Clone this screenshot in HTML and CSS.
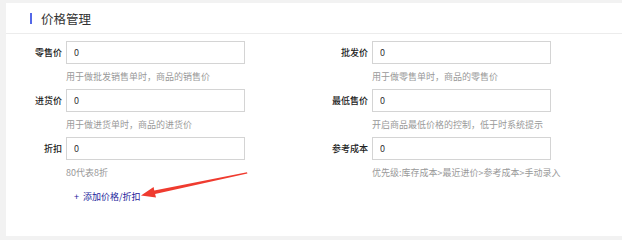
FILE: index.html
```html
<!DOCTYPE html>
<html lang="zh-CN">
<head>
    <meta charset="UTF-8">
    <title>价格管理</title>
    <link rel="stylesheet" href="styles.css">
</head>
<body>

    <div class="panel">
        <!-- Heading -->
        <div class="panel-title">
            <span class="title-bar"></span>
            <span>价格管理</span>
        </div>

        <!-- Price fields -->
        <div class="price-form">
            <div class="field">
                <div class="field-row">
                    <label>零售价</label>
                    <input type="text" value="0">
                </div>
                <p class="hint">用于做批发销售单时，商品的销售价</p>
            </div>
            <div class="field">
                <div class="field-row">
                    <label>批发价</label>
                    <input type="text" value="0">
                </div>
                <p class="hint">用于做零售单时，商品的零售价</p>
            </div>
            <div class="field">
                <div class="field-row">
                    <label>进货价</label>
                    <input type="text" value="0">
                </div>
                <p class="hint">用于做进货单时，商品的进货价</p>
            </div>
            <div class="field">
                <div class="field-row">
                    <label>最低售价</label>
                    <input type="text" value="0">
                </div>
                <p class="hint">开启商品最低价格的控制，低于时系统提示</p>
            </div>
            <div class="field">
                <div class="field-row">
                    <label>折扣</label>
                    <input type="text" value="0">
                </div>
                <p class="hint">80代表8折</p>
            </div>
            <div class="field">
                <div class="field-row">
                    <label>参考成本</label>
                    <input type="text" value="0">
                </div>
                <p class="hint">优先级:库存成本&gt;最近进价&gt;参考成本&gt;手动录入</p>
            </div>
        </div>

        <a class="add-link" href="#">+&nbsp; 添加价格/折扣</a>
    </div>

    <!-- Red annotation arrow -->
    <svg class="arrow" width="622" height="240" viewBox="0 0 622 240">
        <polygon points="141,195.5 153.6,187.1 154.3,190.4 247,172.2 247.4,173.4 155.1,194 156,197.6" fill="#ef3b2f"/>
    </svg>

</body>
</html>
```

FILE: styles.css
```css
body {
    margin: 0;
    background-color: #f2f2f2;
    font-family: "Noto Sans CJK SC", "Microsoft YaHei", sans-serif;
    color: #333;
    height: 240px;
    overflow: hidden;
}

.panel {
    margin: 3px 0 0 6px;
    height: 233px;
    background-color: #ffffff;
}

.panel-title {
    display: flex;
    align-items: center;
    height: 30px;
    padding-left: 24px;
    border-bottom: 1px solid #ececec;
    font-size: 12.5px;
    color: #333;
}

.title-bar {
    width: 2px;
    height: 11px;
    margin-right: 9px;
    background-color: #5468e8;
}

.price-form {
    display: grid;
    grid-template-columns: 306px 1fr;
    padding-top: 7px;
}

.field {
    height: 48px;
}

.field-row {
    display: flex;
    align-items: center;
}

.field-row label {
    width: 56px;
    margin-right: 4px;
    text-align: right;
    font-size: 9px;
    color: #222;
    font-weight: 500;
}

.field-row input {
    width: 179px;
    height: 23px;
    box-sizing: border-box;
    border: 1px solid #d4d4d4;
    padding: 0 7px;
    font-family: inherit;
    font-size: 9px;
    color: #333;
    outline: none;
}

.hint {
    margin: 6px 0 0 60px;
    line-height: 14px;
    font-size: 9px;
    color: #999;
}

.add-link {
    display: block;
    margin: 5px 0 0 68px;
    line-height: 14px;
    font-size: 9px;
    color: #23239b;
    text-decoration: none;
}

.arrow {
    position: absolute;
    left: 0;
    top: 0;
}
```
